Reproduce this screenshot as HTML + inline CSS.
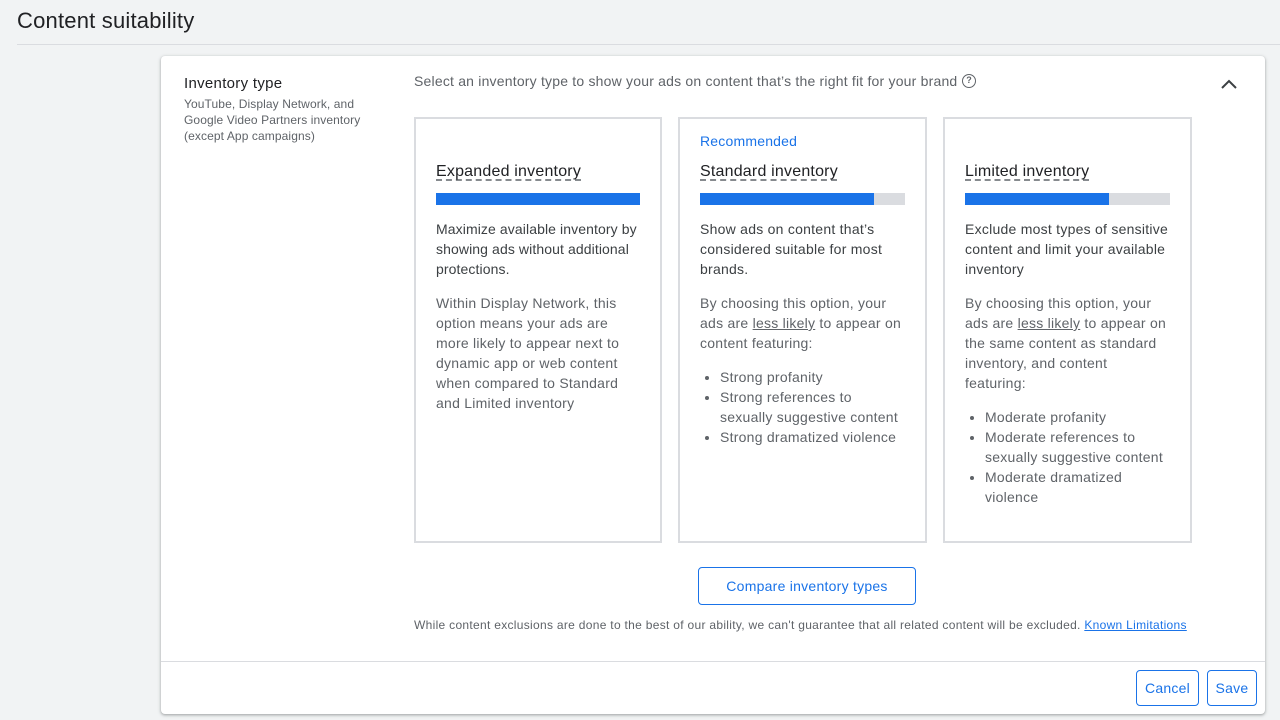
<!DOCTYPE html>
<html><head><style>
*{margin:0;padding:0;box-sizing:border-box}
body{width:1280px;height:720px;background:#f1f3f4;font-family:"Liberation Sans",Arial,sans-serif;position:relative;overflow:hidden;color:#3c4043}
.a{position:absolute}
h1{position:absolute;left:17px;top:8px;font-size:22px;font-weight:400;color:#202124;letter-spacing:.2px}
.hr{position:absolute;left:17px;right:0;top:44px;border-top:1px solid #dadce0}
.panel{position:absolute;left:161px;top:56px;width:1104px;height:658px;background:#fff;border-radius:4px;box-shadow:0 1px 2px rgba(60,64,67,.3),0 1px 3px 1px rgba(60,64,67,.15)}
.card{position:absolute;top:117px;height:426px;border:2px solid #dadce0;background:#fff}
.card .in{position:absolute;left:20px;right:20px;top:0}
.t{position:absolute;top:44px;font-size:16px;color:#202124;text-decoration:underline dashed #5f6368;text-underline-offset:4px;white-space:nowrap;letter-spacing:.2px}
.bar{position:absolute;top:74px;left:0;right:0;height:12px;background:#dadce0}
.bar i{display:block;height:12px;background:#1a73e8}
.p{position:absolute;font-size:14px;line-height:20px;color:#3c4043;letter-spacing:.25px;top:0}
.p u{text-decoration:underline}
ul{padding-left:20px}
.btn{position:absolute;border:1px solid #1a73e8;border-radius:4px;color:#1a73e8;font-size:14px;text-align:center;background:#fff;letter-spacing:.25px}
</style></head><body>
<h1>Content suitability</h1>
<div class="hr"></div>
<div class="panel"></div>
<div class="a" style="left:184px;top:75px;font-size:15px;color:#202124;letter-spacing:.3px">Inventory type</div>
<div class="a" style="left:184px;top:96px;font-size:12px;line-height:16px;color:#5f6368;letter-spacing:.1px">YouTube, Display Network, and<br>Google Video Partners inventory<br>(except App campaigns)</div>
<div class="a" style="left:414px;top:73px;font-size:14px;color:#5f6368;letter-spacing:.2px">Select an inventory type to show your ads on content that’s the right fit for your brand</div>
<div class="a" style="left:962px;top:74px;width:14px;height:14px;border:1.5px solid #5f6368;border-radius:50%;font-size:9px;line-height:11px;text-align:center;font-weight:bold;color:#5f6368">?</div>
<svg class="a" style="left:1219px;top:76px" width="20" height="16" viewBox="0 0 20 16"><path d="M3 12 L10 5 L17 12" fill="none" stroke="#3c4043" stroke-width="2"/></svg>

<div class="card" style="left:414px;width:248px"><div class="in">
<div class="t">Expanded inventory</div>
<div class="bar"><i style="width:100%"></i></div>
<div class="p" style="top:100px;letter-spacing:.1px">Maximize available inventory by showing ads without additional protections.</div>
<div class="p" style="top:174px;color:#5f6368">Within Display Network, this option means your ads are more likely to appear next to dynamic app or web content when compared to Standard and Limited inventory</div>
</div></div>

<div class="card" style="left:678px;width:249px"><div class="in">
<div class="a" style="top:14px;font-size:14px;color:#1a73e8;letter-spacing:.2px">Recommended</div>
<div class="t">Standard inventory</div>
<div class="bar"><i style="width:85%"></i></div>
<div class="p" style="top:100px">Show ads on content that’s considered suitable for most brands.</div>
<div class="p" style="top:174px;color:#5f6368">By choosing this option, your ads are <u>less likely</u> to appear on content featuring:<ul style="margin-top:14px"><li>Strong profanity</li><li>Strong references to sexually suggestive content</li><li>Strong dramatized violence</li></ul></div>
</div></div>

<div class="card" style="left:943px;width:249px"><div class="in">
<div class="t">Limited inventory</div>
<div class="bar"><i style="width:70%"></i></div>
<div class="p" style="top:100px">Exclude most types of sensitive content and limit your available inventory</div>
<div class="p" style="top:174px;color:#5f6368">By choosing this option, your ads are <u>less likely</u> to appear on the same content as standard inventory, and content featuring:<ul style="margin-top:14px"><li>Moderate profanity</li><li>Moderate references to sexually suggestive content</li><li>Moderate dramatized violence</li></ul></div>
</div></div>

<div class="btn" style="left:698px;top:567px;width:218px;height:38px;line-height:36px;font-size:14px">Compare inventory types</div>
<div class="a" style="left:414px;top:618px;font-size:12px;color:#5f6368;letter-spacing:.3px;white-space:nowrap">While content exclusions are done to the best of our ability, we can't guarantee that all related content will be excluded. <span style="color:#1a73e8;text-decoration:underline">Known Limitations</span></div>
<div class="a" style="left:161px;top:661px;width:1104px;border-top:1px solid #dadce0"></div>
<div class="btn" style="left:1136px;top:670px;width:63px;height:36px;line-height:34px">Cancel</div>
<div class="btn" style="left:1207px;top:670px;width:50px;height:36px;line-height:34px">Save</div>
</body></html>
